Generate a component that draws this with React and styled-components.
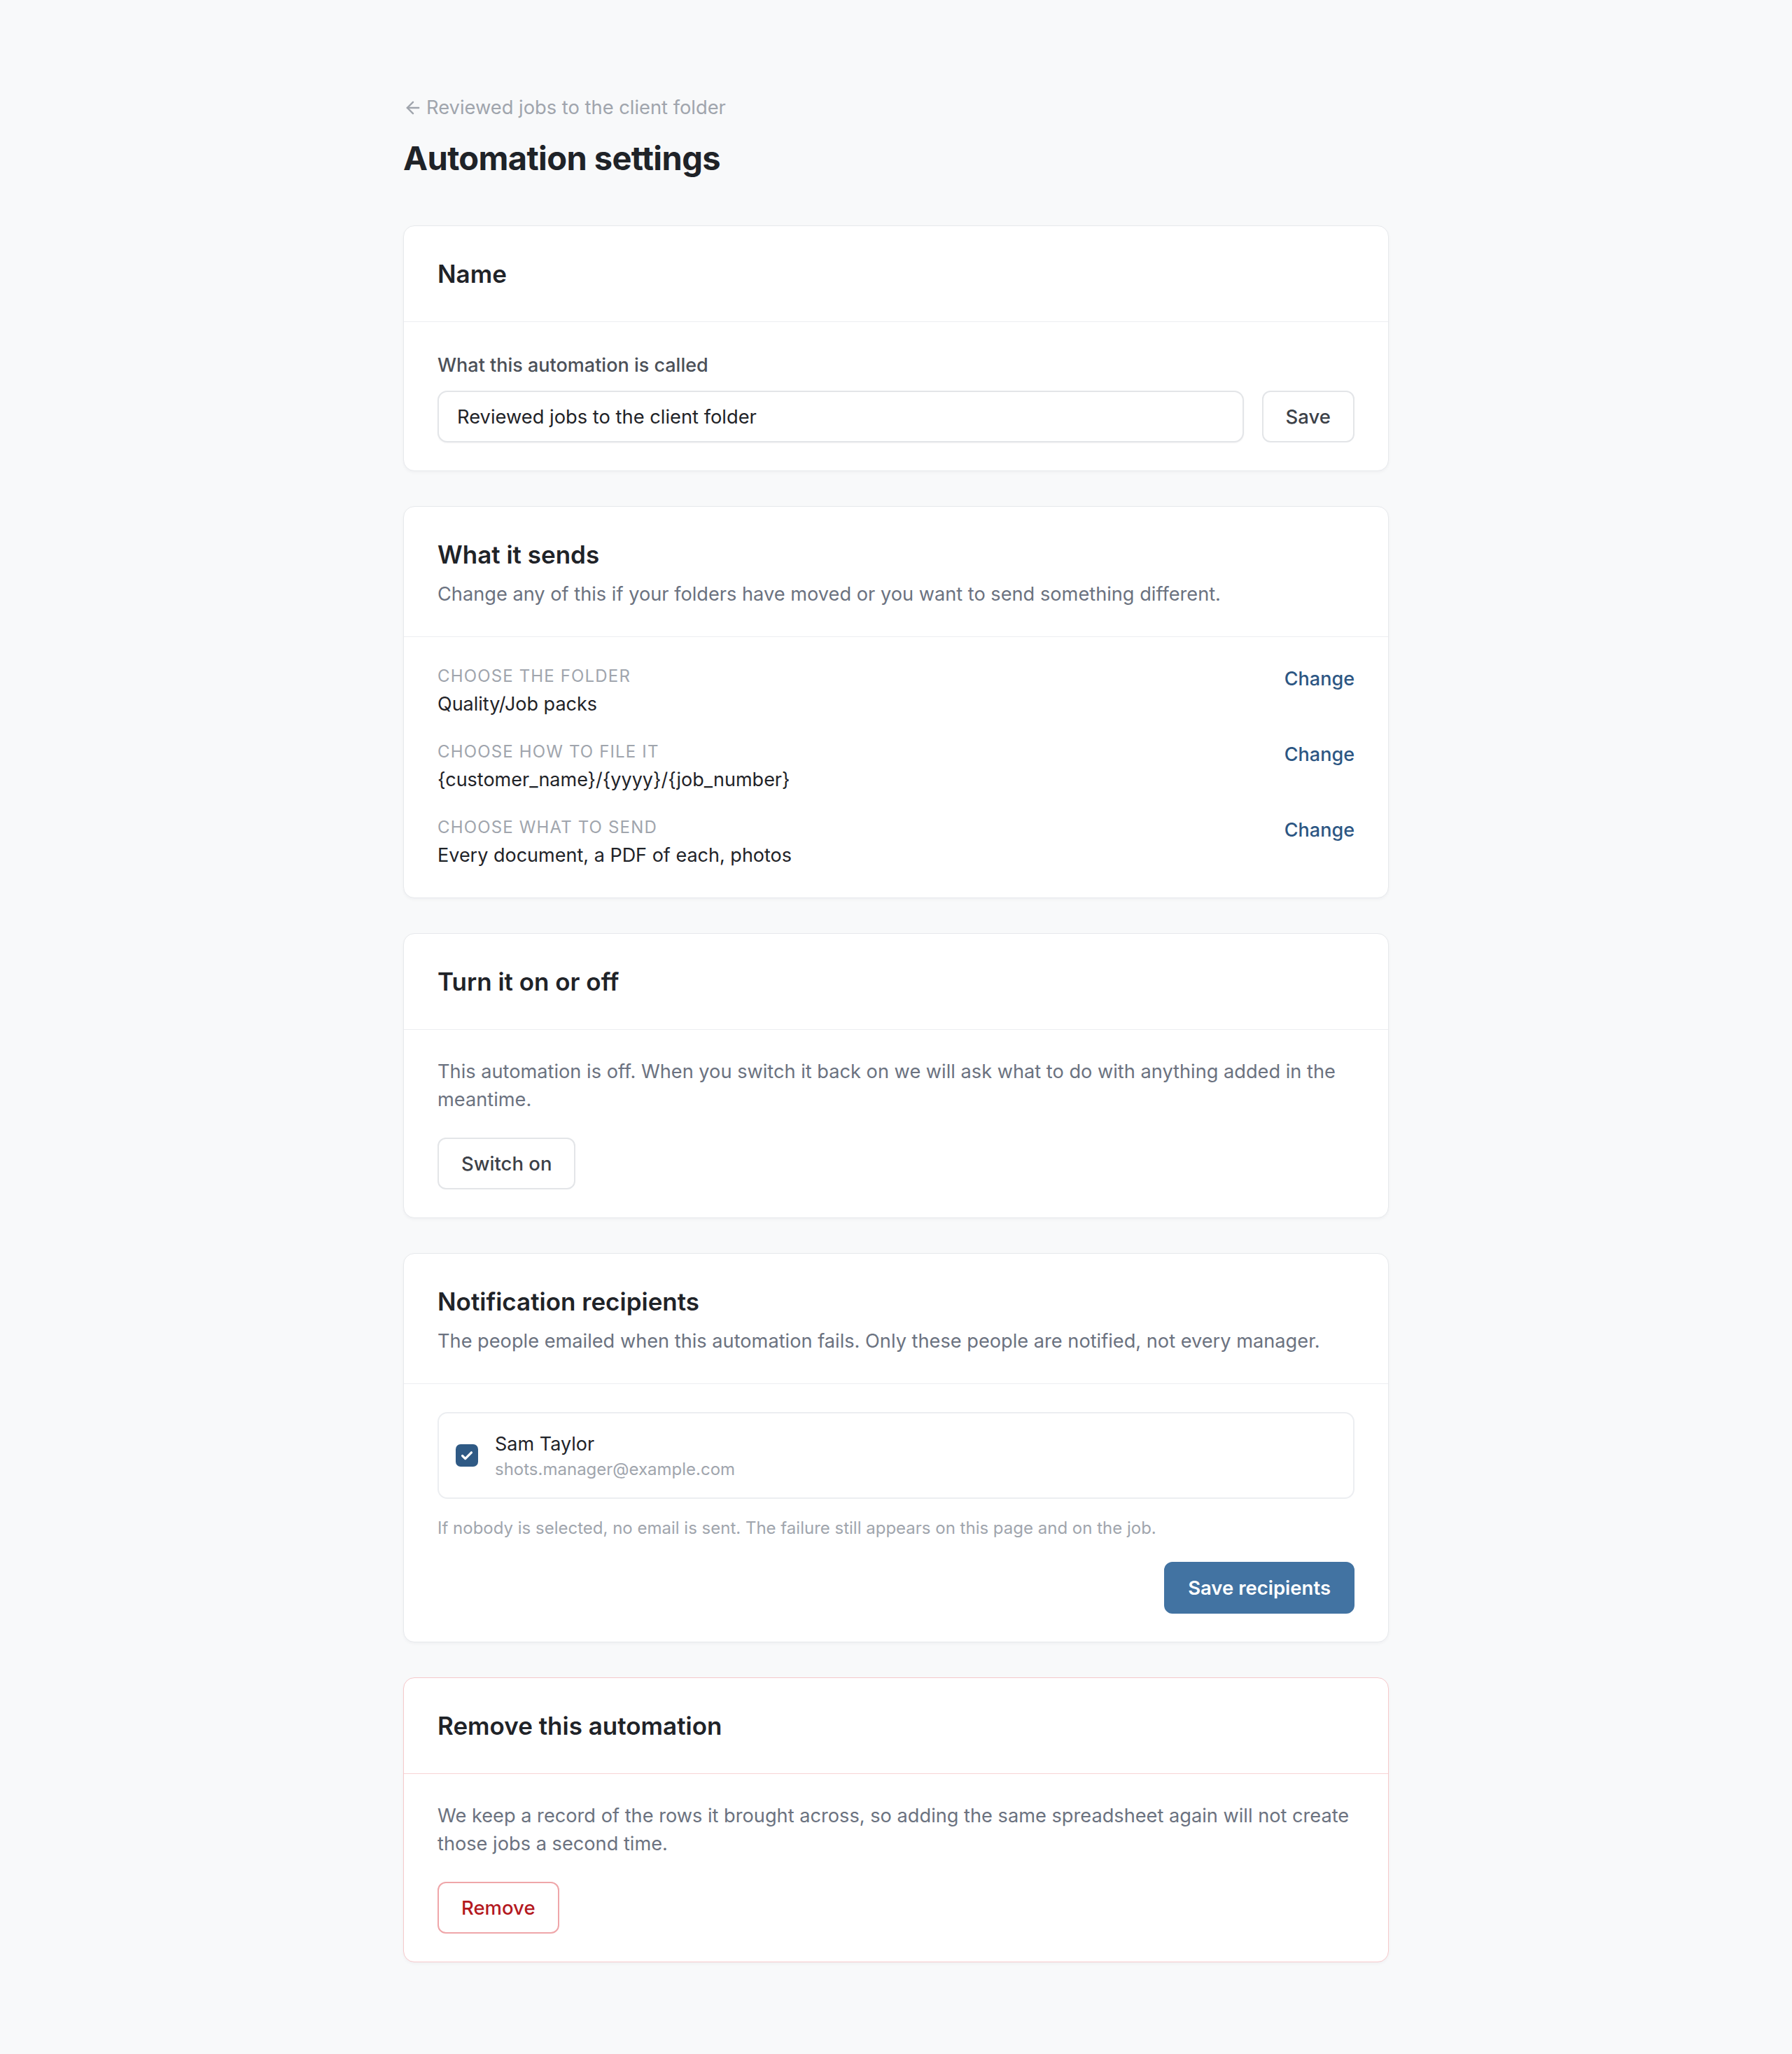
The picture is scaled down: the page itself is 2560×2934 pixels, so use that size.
import React from "react";
import styled, { createGlobalStyle } from "styled-components";

const GlobalStyle = createGlobalStyle`
  html, body { margin: 0; padding: 0; }
  body {
    background: #f8f9fa;
    font-family: Inter, "Noto Sans", "Liberation Sans", sans-serif;
    color: #1f2328;
    -webkit-font-smoothing: antialiased;
  }
  * { box-sizing: border-box; }
`;

const Page = styled.main`
  padding: 134px 0 128px;
`;

const Container = styled.div`
  width: 1408px;
  margin: 0 auto;
`;

const BackLink = styled.a`
  display: flex;
  align-items: center;
  gap: 5px;
  font-size: 27.3px;
  line-height: 40px;
  color: #a0a5ad;
  text-decoration: none;
  width: fit-content;
`;

const Title = styled.h1`
  margin: 20px 0 64px;
  font-size: 47px;
  line-height: 64px;
  font-weight: 700;
  letter-spacing: -0.6px;
  color: #1f2328;
`;

const Stack = styled.div`
  display: flex;
  flex-direction: column;
  gap: 50px;
`;

const Card = styled.section`
  background: #ffffff;
  border: 1px solid ${(p) => (p.$danger ? "#f6c9cb" : "#e7e9ec")};
  border-radius: 16px;
  box-shadow: 0 2px 4px rgba(16, 24, 40, 0.04);
  overflow: hidden;
`;

const CardHeader = styled.header`
  padding: 48px 48px ${(p) => (p.$withSub ? 40 : 48)}px;
  border-bottom: 1px solid ${(p) => (p.$danger ? "#f8d4d6" : "#eceef1")};
`;

const CardTitle = styled.h2`
  margin: 0;
  font-size: 35px;
  line-height: 40px;
  font-weight: 600;
  color: #1f2328;
`;

const CardSubtitle = styled.p`
  margin: 17px 0 0;
  font-size: 27.2px;
  line-height: 40px;
  color: #6b7280;
`;

const CardBody = styled.div`
  padding: 40px 48px;
  display: flex;
  flex-direction: column;
`;

const FieldLabel = styled.label`
  display: block;
  font-size: 27px;
  line-height: 40px;
  font-weight: 500;
  color: #4b5058;
  margin: 2px 0 16px;
`;

const InputRow = styled.div`
  display: flex;
  gap: 26px;
`;

const TextInput = styled.input`
  flex: 1;
  height: 74px;
  padding: 0 26px;
  border: 2px solid #e3e5e8;
  border-radius: 14px;
  font-family: inherit;
  font-size: 27.3px;
  color: #1f2328;
  background: #fff;
  box-shadow: 0 1px 2px rgba(16, 24, 40, 0.05);
  outline: none;
`;

const Button = styled.button`
  height: 74px;
  padding: 0 ${(p) => p.$pad || 32}px;
  border-radius: 12px;
  font-family: inherit;
  font-size: 27.5px;
  font-weight: ${(p) => (p.$variant === "primary" ? 600 : 500)};
  cursor: pointer;
  background: ${(p) => (p.$variant === "primary" ? "#4273a2" : "#ffffff")};
  color: ${(p) =>
    p.$variant === "primary" ? "#ffffff" : p.$variant === "danger" ? "#b4191f" : "#3c4148"};
  border: 2px solid
    ${(p) =>
      p.$variant === "primary" ? "#4273a2" : p.$variant === "danger" ? "#efa6a9" : "#e3e5e8"};
  align-self: ${(p) => p.$align || "auto"};
  flex-shrink: 0;
`;

const SettingList = styled.div`
  display: flex;
  flex-direction: column;
  gap: 32px;
`;

const SettingRow = styled.div`
  display: flex;
  justify-content: space-between;
  align-items: flex-start;
`;

const SettingText = styled.div`
  display: flex;
  flex-direction: column;
  gap: 4px;
`;

const SettingLabel = styled.span`
  font-size: 24px;
  line-height: 32px;
  letter-spacing: 1.15px;
  text-transform: uppercase;
  color: #a0a5ad;
`;

const SettingValue = styled.span`
  font-size: 27px;
  line-height: 40px;
  color: #1f2328;
`;

const ChangeLink = styled.a`
  font-size: 27px;
  line-height: 40px;
  font-weight: 500;
  color: #2c5683;
  text-decoration: none;
  cursor: pointer;
`;

const Paragraph = styled.p`
  margin: 0 0 34px;
  font-size: 27.2px;
  line-height: 40px;
  color: #6b7280;
`;

const RecipientBox = styled.label`
  display: flex;
  align-items: center;
  gap: 24px;
  padding: 24px;
  border: 2px solid #eceef1;
  border-radius: 14px;
  cursor: pointer;
`;

const Check = styled.span`
  width: 32px;
  height: 32px;
  border-radius: 7px;
  background: #2f5a85;
  display: flex;
  align-items: center;
  justify-content: center;
  flex-shrink: 0;
`;

const RecipientText = styled.div`
  display: flex;
  flex-direction: column;
`;

const RecipientName = styled.span`
  font-size: 27px;
  line-height: 40px;
  color: #1f2328;
`;

const RecipientEmail = styled.span`
  font-size: 24px;
  line-height: 32px;
  color: #a0a5ad;
`;

const Helper = styled.p`
  margin: 26px 0 32px;
  font-size: 24px;
  line-height: 32px;
  color: #a0a5ad;
`;

const ArrowIcon = () => (
  <svg width="28" height="28" viewBox="0 0 24 24" fill="none" stroke="currentColor"
    strokeWidth="2.1" strokeLinecap="round" strokeLinejoin="round" aria-hidden="true">
    <path d="M19 12H5" />
    <path d="M12 19l-7-7 7-7" />
  </svg>
);

const CheckIcon = () => (
  <svg width="22" height="22" viewBox="0 0 24 24" fill="none" stroke="#ffffff"
    strokeWidth="3.6" strokeLinecap="round" strokeLinejoin="round" aria-hidden="true">
    <path d="M5 12.5l4.5 4.5L19 7.5" />
  </svg>
);

const settings = [
  { label: "Choose the folder", value: "Quality/Job packs" },
  { label: "Choose how to file it", value: "{customer_name}/{yyyy}/{job_number}" },
  { label: "Choose what to send", value: "Every document, a PDF of each, photos" },
];

export default function App() {
  return (
    <>
      <GlobalStyle />
      <Page>
        <Container>
          <BackLink href="#">
            <ArrowIcon />
            Reviewed jobs to the client folder
          </BackLink>
          <Title>Automation settings</Title>

          <Stack>
            <Card>
              <CardHeader>
                <CardTitle>Name</CardTitle>
              </CardHeader>
              <CardBody>
                <FieldLabel htmlFor="name">What this automation is called</FieldLabel>
                <InputRow>
                  <TextInput id="name" defaultValue="Reviewed jobs to the client folder" />
                  <Button $pad={32}>Save</Button>
                </InputRow>
              </CardBody>
            </Card>

            <Card>
              <CardHeader $withSub>
                <CardTitle>What it sends</CardTitle>
                <CardSubtitle>
                  Change any of this if your folders have moved or you want to send something different.
                </CardSubtitle>
              </CardHeader>
              <CardBody>
                <SettingList>
                  {settings.map((s) => (
                    <SettingRow key={s.label}>
                      <SettingText>
                        <SettingLabel>{s.label}</SettingLabel>
                        <SettingValue>{s.value}</SettingValue>
                      </SettingText>
                      <ChangeLink>Change</ChangeLink>
                    </SettingRow>
                  ))}
                </SettingList>
              </CardBody>
            </Card>

            <Card>
              <CardHeader>
                <CardTitle>Turn it on or off</CardTitle>
              </CardHeader>
              <CardBody>
                <Paragraph>
                  This automation is off. When you switch it back on we will ask what to do with anything added in the meantime.
                </Paragraph>
                <Button $align="flex-start">Switch on</Button>
              </CardBody>
            </Card>

            <Card>
              <CardHeader $withSub>
                <CardTitle>Notification recipients</CardTitle>
                <CardSubtitle>
                  The people emailed when this automation fails. Only these people are notified, not every manager.
                </CardSubtitle>
              </CardHeader>
              <CardBody>
                <RecipientBox>
                  <Check>
                    <CheckIcon />
                  </Check>
                  <RecipientText>
                    <RecipientName>Sam Taylor</RecipientName>
                    <RecipientEmail>shots.manager@example.com</RecipientEmail>
                  </RecipientText>
                </RecipientBox>
                <Helper>
                  If nobody is selected, no email is sent. The failure still appears on this page and on the job.
                </Helper>
                <Button $variant="primary" $align="flex-end">Save recipients</Button>
              </CardBody>
            </Card>

            <Card $danger>
              <CardHeader $danger>
                <CardTitle>Remove this automation</CardTitle>
              </CardHeader>
              <CardBody>
                <Paragraph>
                  We keep a record of the rows it brought across, so adding the same spreadsheet again will not create those jobs a second time.
                </Paragraph>
                <Button $variant="danger" $align="flex-start">Remove</Button>
              </CardBody>
            </Card>
          </Stack>
        </Container>
      </Page>
    </>
  );
}
